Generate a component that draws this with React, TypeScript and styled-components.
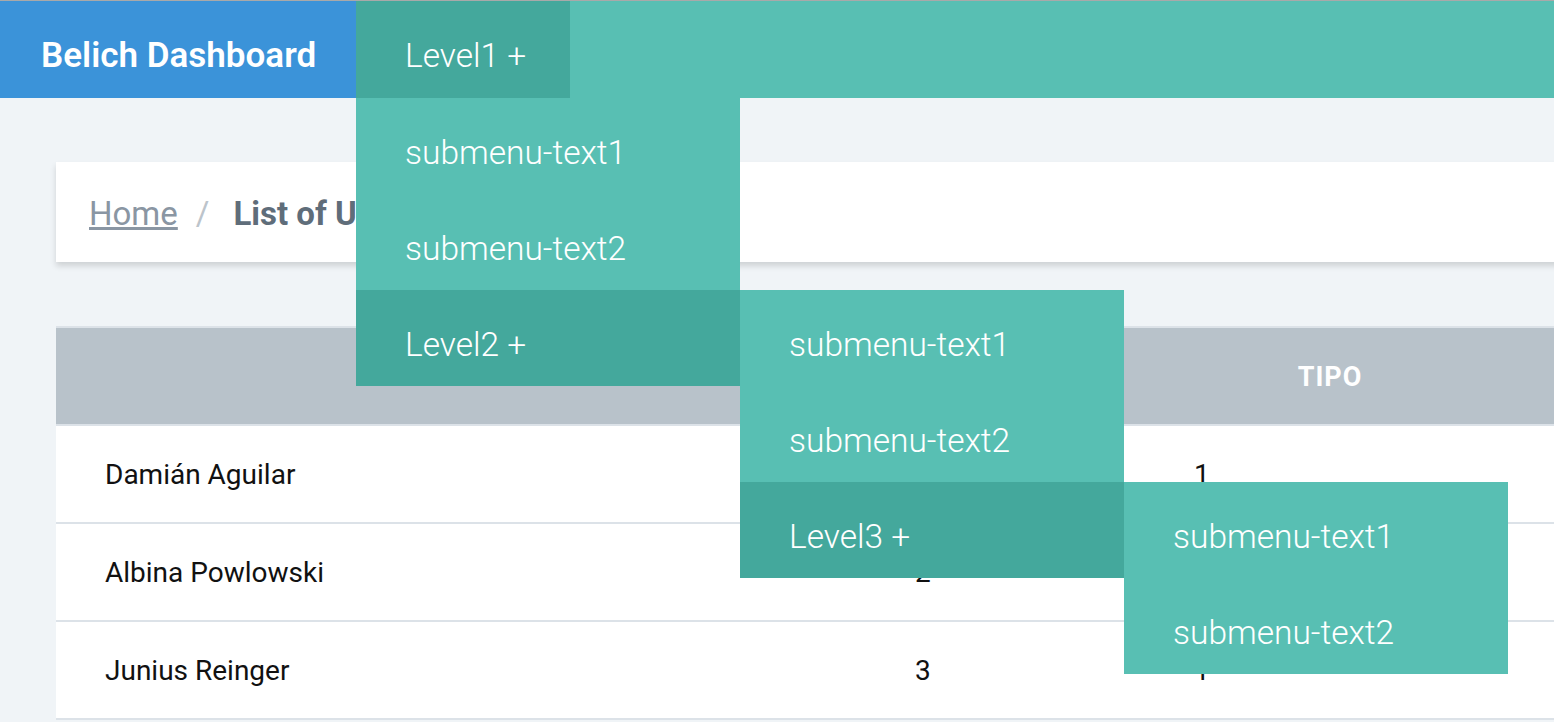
import React from 'react';
import styled, { createGlobalStyle } from 'styled-components';

const GlobalStyle = createGlobalStyle`
  html, body {
    margin: 0;
    padding: 0;
    overflow: hidden;
    background: #f0f4f7;
    font-family: Roboto, 'Liberation Sans', sans-serif;
  }
`;

const Page = styled.div`
  width: 1700px;
  min-height: 722px;
  border-top: 1px solid #a9a9a9;
`;

const Nav = styled.nav`
  display: flex;
  height: 97px;
  background: #58bfb3;
  position: relative;
  z-index: 10;
`;

const Brand = styled.div`
  display: flex;
  align-items: center;
  width: 356px;
  padding: 11px 0 0 41px;
  box-sizing: border-box;
  background: #3b93d9;
  color: #fff;
  font-size: 35px;
  font-weight: 600;
`;

const MenuItem = styled.div<{ $active?: boolean; $width?: number; $top?: boolean }>`
  position: relative;
  display: flex;
  align-items: center;
  box-sizing: border-box;
  height: ${(p) => (p.$top ? '97px' : '96px')};
  width: ${(p) => (p.$width ? `${p.$width}px` : 'auto')};
  padding: 12px 49px 0;
  background: ${(p) => (p.$active ? '#44a89c' : '#58bfb3')};
  color: #fff;
  font-size: 33.5px;
  font-weight: 300;
  white-space: nowrap;
`;

const Dropdown = styled.div<{ $side?: boolean }>`
  position: absolute;
  top: ${(p) => (p.$side ? '0' : '100%')};
  left: ${(p) => (p.$side ? '100%' : '0')};
  width: 384px;
  display: flex;
  flex-direction: column;
`;

const Content = styled.main`
  padding: 64px 0 0 56px;
`;

const Card = styled.div`
  display: flex;
  align-items: center;
  height: 100px;
  padding: 3px 0 0 33px;
  box-sizing: border-box;
  background: #fff;
  box-shadow: 0 4px 6px rgba(0, 0, 0, 0.14);
  font-size: 33px;
`;

const Crumb = styled.a`
  color: #8a96a3;
  text-decoration: underline;
`;

const Sep = styled.span`
  color: #bcc4cb;
  margin: 0 24px 0 18px;
`;

const Current = styled.span`
  color: #5f6d7a;
  font-weight: 700;
`;

const Table = styled.div`
  margin-top: 64px;
  background: #fff;
  border-top: 2px solid #dce2e8;
`;

const Row = styled.div<{ $head?: boolean }>`
  display: grid;
  grid-template-columns: 810px 279px 370px 1fr;
  height: 96px;
  background: ${(p) => (p.$head ? '#b8c2ca' : '#fff')};
  border-bottom: 2px solid #dce2e8;
`;

const HeadCell = styled.div`
  display: flex;
  align-items: center;
  justify-content: center;
  padding-top: 1px;
  color: #fff;
  font-size: 27px;
  font-weight: 700;
  letter-spacing: 1px;
  text-transform: uppercase;
`;

const Cell = styled.div`
  display: flex;
  align-items: center;
  padding-left: 49px;
  color: #111;
  font-size: 28px;
`;

const users = [
  { name: 'Damián Aguilar', id: 1, tipo: 1 },
  { name: 'Albina Powlowski', id: 2, tipo: 1 },
  { name: 'Junius Reinger', id: 3, tipo: 1 },
];

export default function App() {
  return (
    <Page>
      <GlobalStyle />
      <Nav>
        <Brand>Belich Dashboard</Brand>
        <MenuItem $active $top $width={214}>
          Level1 +
          <Dropdown>
            <MenuItem>submenu-text1</MenuItem>
            <MenuItem>submenu-text2</MenuItem>
            <MenuItem $active>
              Level2 +
              <Dropdown $side>
                <MenuItem>submenu-text1</MenuItem>
                <MenuItem>submenu-text2</MenuItem>
                <MenuItem $active>
                  Level3 +
                  <Dropdown $side>
                    <MenuItem>submenu-text1</MenuItem>
                    <MenuItem>submenu-text2</MenuItem>
                  </Dropdown>
                </MenuItem>
              </Dropdown>
            </MenuItem>
          </Dropdown>
        </MenuItem>
      </Nav>
      <Content>
        <Card>
          <Crumb>Home</Crumb>
          <Sep>/</Sep>
          <Current>List of Users</Current>
        </Card>
        <Table>
          <Row $head>
            <HeadCell>Usuarios</HeadCell>
            <HeadCell>Id</HeadCell>
            <HeadCell>Tipo</HeadCell>
            <HeadCell />
          </Row>
          {users.map((u) => (
            <Row key={u.id}>
              <Cell>{u.name}</Cell>
              <Cell>{u.id}</Cell>
              <Cell>{u.tipo}</Cell>
              <Cell />
            </Row>
          ))}
        </Table>
      </Content>
    </Page>
  );
}
